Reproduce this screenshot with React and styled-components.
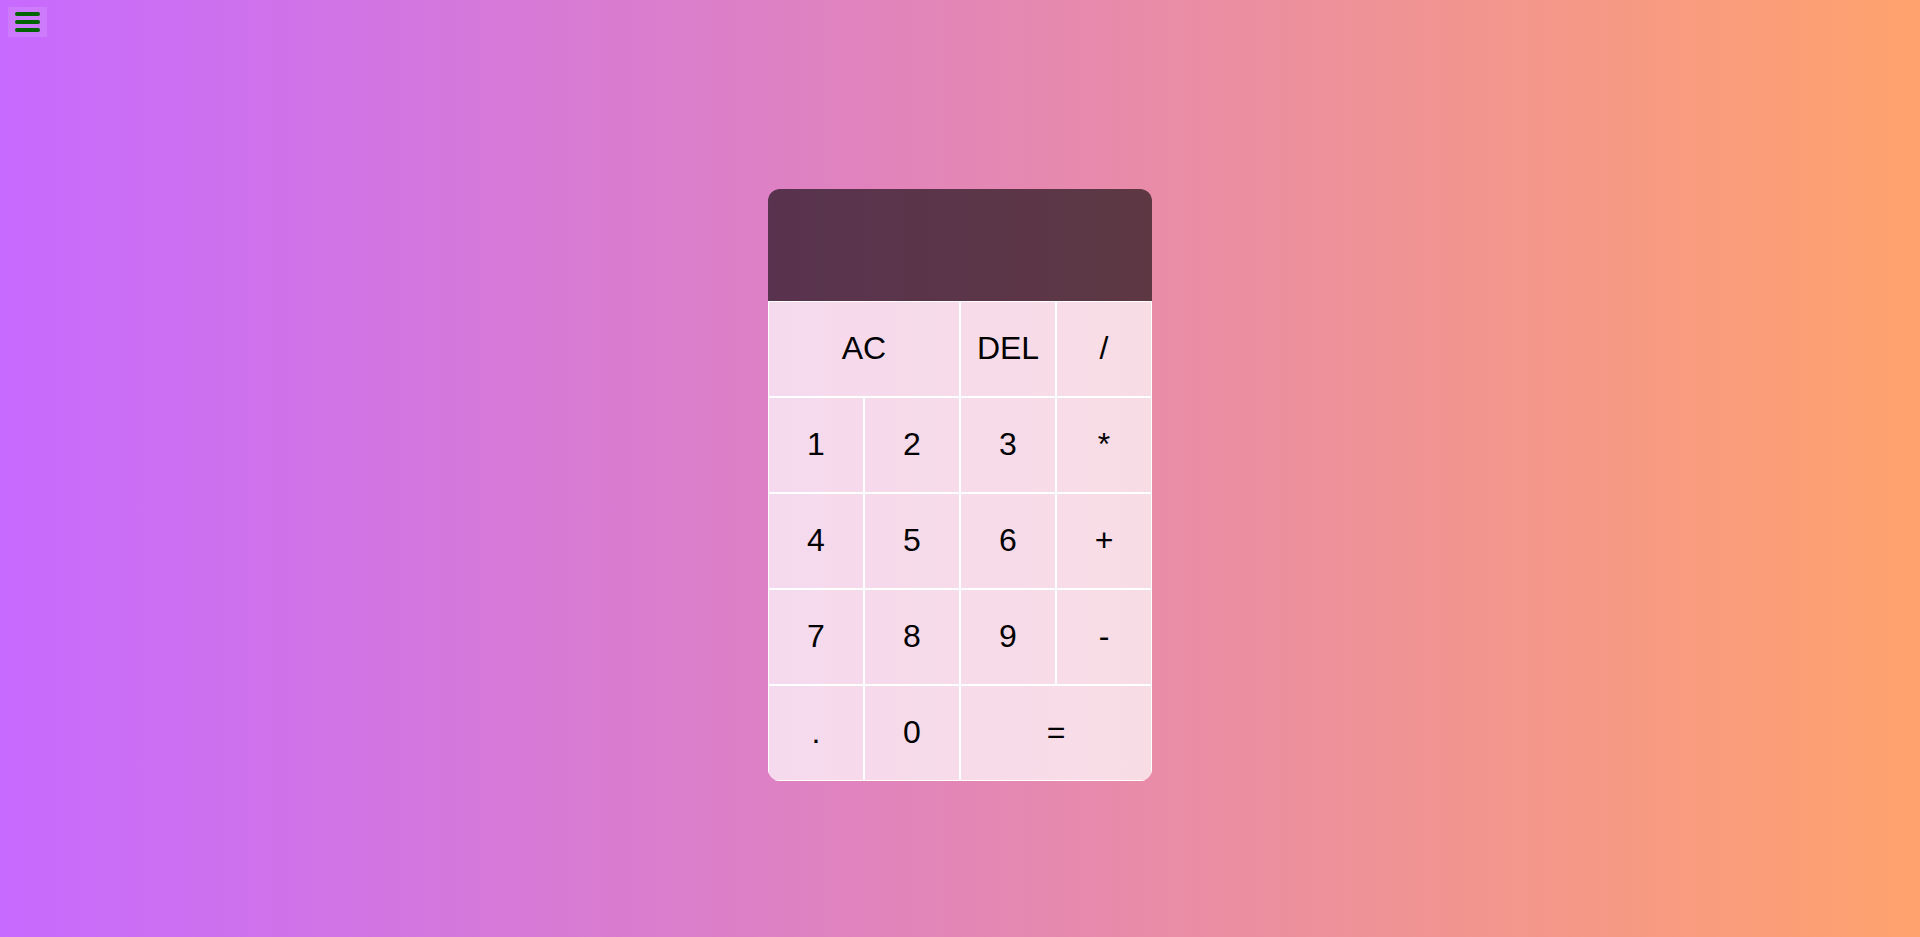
import React, { useState } from "react";
import styled, { createGlobalStyle } from "styled-components";

const GlobalStyle = createGlobalStyle`
  *, *::before, *::after {
    box-sizing: border-box;
  }
  html, body {
    margin: 0;
    padding: 0;
  }
  body {
    min-height: 100vh;
    background: linear-gradient(to right, #c76aff, #ffa26d);
    font-family: "Liberation Sans", Arial, sans-serif;
  }
`;

const Page = styled.div`
  min-height: 100vh;
  display: flex;
  flex-direction: column;
`;

const TopBar = styled.div`
  padding: 7px 8px 0;
  display: flex;
`;

const MenuButton = styled.button`
  width: 39px;
  height: 30px;
  padding: 0 7px;
  border: none;
  background: rgba(255, 255, 255, 0.1);
  display: flex;
  flex-direction: column;
  justify-content: center;
  gap: 4px;
  cursor: pointer;
`;

const Bar = styled.span`
  display: block;
  width: 25px;
  height: 4px;
  border-radius: 2px;
  background: #006400;
`;

const CalculatorGrid = styled.div`
  margin: 152px auto 0;
  display: grid;
  grid-template-columns: repeat(4, 96px);
  grid-template-rows: minmax(112px, auto) repeat(5, 96px);
  border-radius: 12px;
  overflow: hidden;
`;

const Output = styled.div`
  grid-column: 1 / -1;
  background-color: rgba(0, 0, 0, 0.6);
  display: flex;
  flex-direction: column;
  align-items: flex-end;
  justify-content: space-around;
  padding: 10px;
  word-wrap: break-word;
  word-break: break-all;
`;

const Previous = styled.div`
  color: rgba(255, 255, 255, 0.75);
  font-size: 24px;
`;

const Current = styled.div`
  color: white;
  font-size: 40px;
`;

const Key = styled.button`
  grid-column: ${(p) => (p.$wide ? "span 2" : "auto")};
  font-family: "Liberation Sans", Arial, sans-serif;
  font-size: 32px;
  color: #000;
  border: 1px solid white;
  outline: none;
  background-color: rgba(255, 255, 255, 0.7);
  cursor: pointer;
  padding: 0 0 2px;

  &:hover {
    background-color: rgba(255, 255, 255, 0.9);
  }
`;

const keys = [
  { label: "AC", wide: true },
  { label: "DEL" },
  { label: "/" },
  { label: "1" },
  { label: "2" },
  { label: "3" },
  { label: "*" },
  { label: "4" },
  { label: "5" },
  { label: "6" },
  { label: "+" },
  { label: "7" },
  { label: "8" },
  { label: "9" },
  { label: "-" },
  { label: "." },
  { label: "0" },
  { label: "=", wide: true },
];

export default function App() {
  const [current, setCurrent] = useState("");
  const [previous, setPrevious] = useState("");

  const press = (label) => {
    if (label === "AC") {
      setCurrent("");
      setPrevious("");
    } else if (label === "DEL") {
      setCurrent((c) => c.slice(0, -1));
    } else if (label === "=") {
      try {
        // eslint-disable-next-line no-new-func
        const result = Function(`return (${previous}${current})`)();
        setCurrent(String(result));
        setPrevious("");
      } catch (e) {
        setCurrent("");
      }
    } else if ("+-*/".includes(label)) {
      if (!current) return;
      setPrevious(previous + current + " " + label + " ");
      setCurrent("");
    } else {
      setCurrent((c) => c + label);
    }
  };

  return (
    <>
      <GlobalStyle />
      <Page>
        <TopBar>
          <MenuButton aria-label="menu">
            <Bar />
            <Bar />
            <Bar />
          </MenuButton>
        </TopBar>
        <CalculatorGrid>
          <Output>
            <Previous>{previous}</Previous>
            <Current>{current}</Current>
          </Output>
          {keys.map((k) => (
            <Key key={k.label} $wide={k.wide} onClick={() => press(k.label)}>
              {k.label}
            </Key>
          ))}
        </CalculatorGrid>
      </Page>
    </>
  );
}
